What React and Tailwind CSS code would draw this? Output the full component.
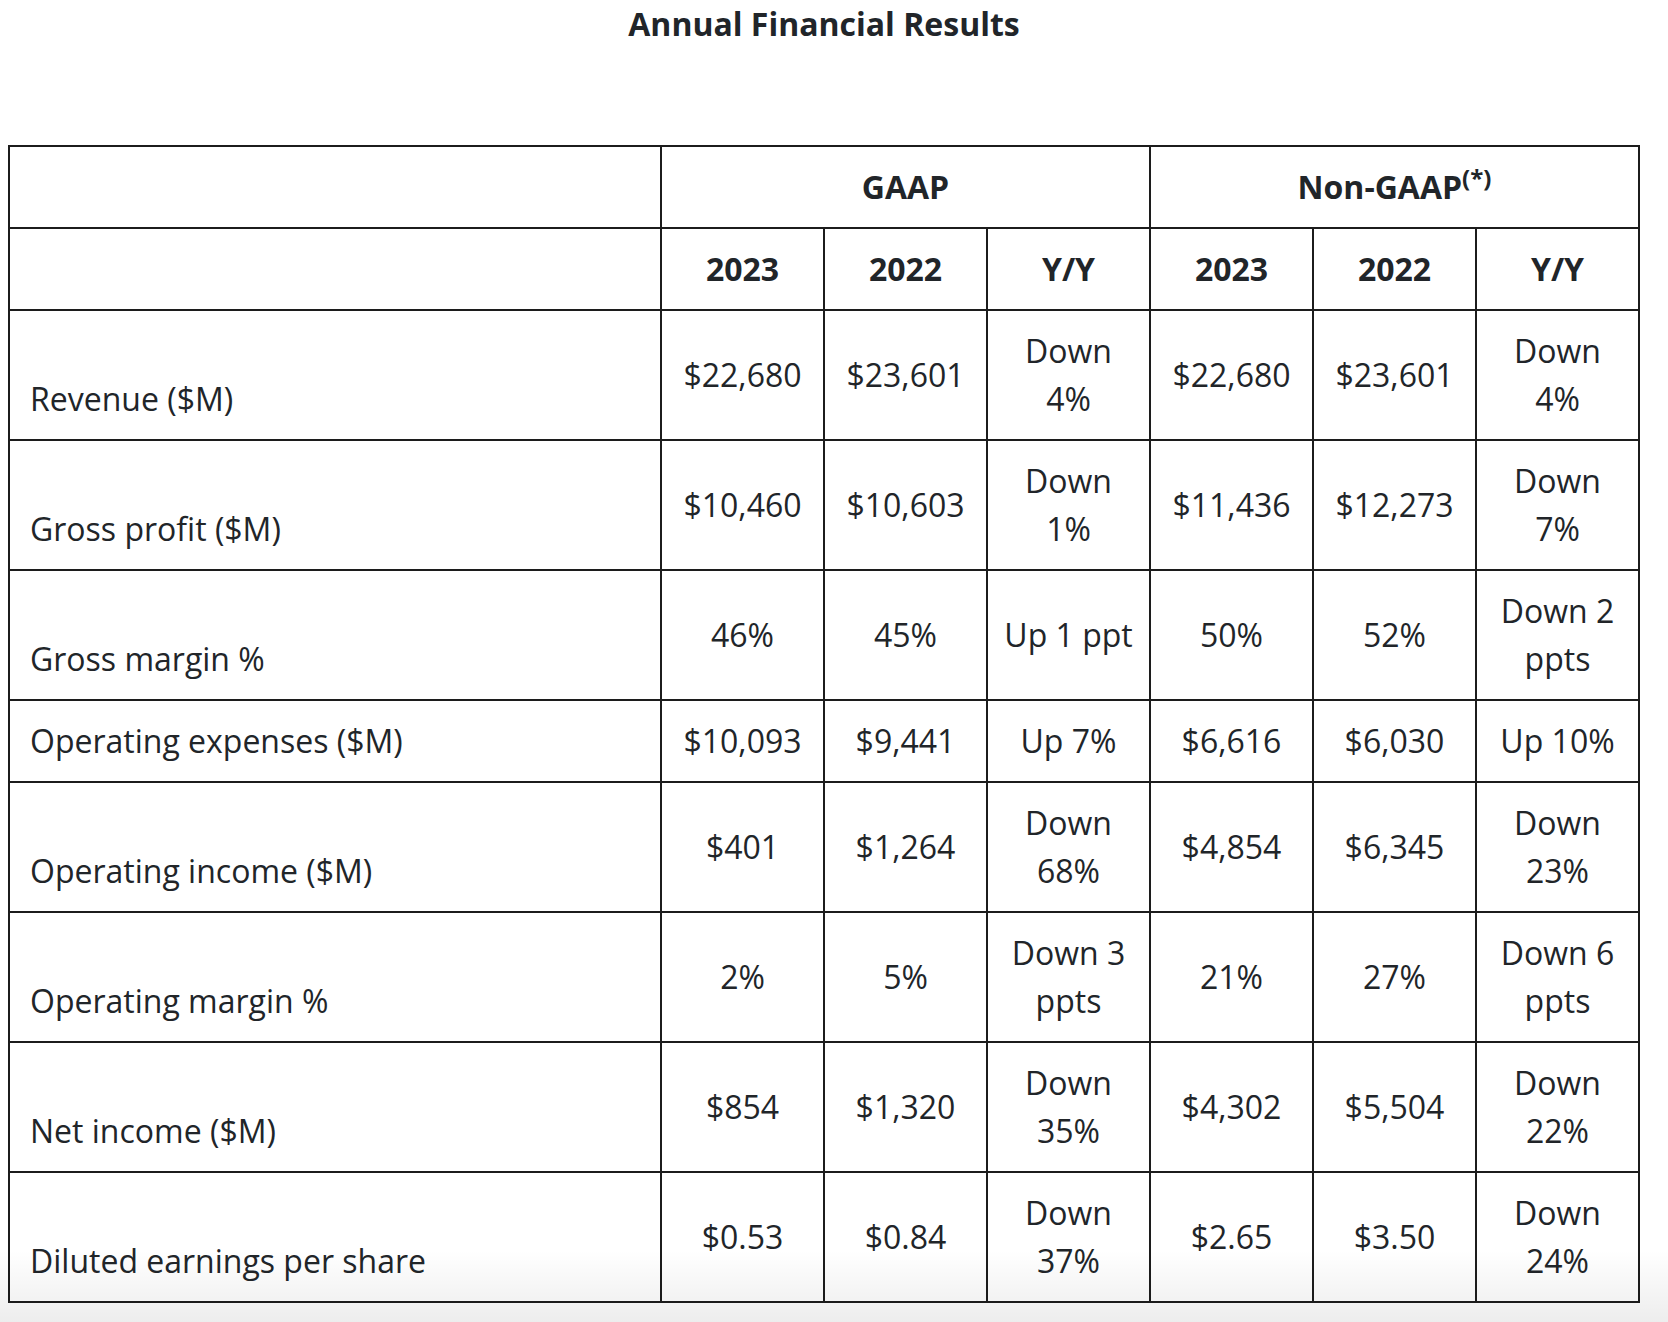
import React from 'react';

const rows = [
  { label: 'Revenue ($M)', gaap: ['$22,680', '$23,601', 'Down 4%'], non: ['$22,680', '$23,601', 'Down 4%'] },
  { label: 'Gross profit ($M)', gaap: ['$10,460', '$10,603', 'Down 1%'], non: ['$11,436', '$12,273', 'Down 7%'] },
  { label: 'Gross margin %', gaap: ['46%', '45%', 'Up 1 ppt'], non: ['50%', '52%', 'Down 2 ppts'] },
  { label: 'Operating expenses ($M)', gaap: ['$10,093', '$9,441', 'Up 7%'], non: ['$6,616', '$6,030', 'Up 10%'] },
  { label: 'Operating income ($M)', gaap: ['$401', '$1,264', 'Down 68%'], non: ['$4,854', '$6,345', 'Down 23%'] },
  { label: 'Operating margin %', gaap: ['2%', '5%', 'Down 3 ppts'], non: ['21%', '27%', 'Down 6 ppts'] },
  { label: 'Net income ($M)', gaap: ['$854', '$1,320', 'Down 35%'], non: ['$4,302', '$5,504', 'Down 22%'] },
  { label: 'Diluted earnings per share', gaap: ['$0.53', '$0.84', 'Down 37%'], non: ['$2.65', '$3.50', 'Down 24%'] },
];

const cell = 'border-2 border-[#1c1c1c] px-[14px] py-4 text-center align-middle';

const App = () => {
  return (
    <div className="relative w-full h-[1322px] overflow-hidden bg-white text-[#212529] font-['Open_Sans','Noto_Sans',sans-serif]">
      <div className="ml-[8px] w-[1632px]">
        {/* Titolo */}
        <h2 className="text-center text-[32px] leading-[48px] font-bold mb-[97px]">Annual Financial Results</h2>

        <table className="w-full table-fixed border-collapse text-[32px] leading-[48px]">
          <colgroup>
            <col className="w-[652px]" />
            <col />
            <col />
            <col />
            <col />
            <col />
            <col />
          </colgroup>
          <thead>
            <tr>
              <th className={cell}></th>
              <th colSpan={3} className={`${cell} font-bold`}>GAAP</th>
              <th colSpan={3} className={`${cell} font-bold`}>
                Non-GAAP<sup>(*)</sup>
              </th>
            </tr>
            <tr>
              <th className={cell}></th>
              {['2023', '2022', 'Y/Y', '2023', '2022', 'Y/Y'].map((h, i) => (
                <th key={i} className={`${cell} font-bold`}>{h}</th>
              ))}
            </tr>
          </thead>
          <tbody>
            {rows.map(r => (
              <tr key={r.label}>
                <td className="border-2 border-[#1c1c1c] px-5 py-4 text-left align-bottom">{r.label}</td>
                {[...r.gaap, ...r.non].map((v, i) => (
                  <td key={i} className={cell}>{v}</td>
                ))}
              </tr>
            ))}
          </tbody>
        </table>
      </div>

      {/* ombra in fondo alla pagina */}
      <div className="pointer-events-none absolute left-0 right-0 bottom-0 h-[72px] bg-linear-to-b from-transparent to-[rgba(0,0,0,0.07)]" />
    </div>
  );
};

export default App;
